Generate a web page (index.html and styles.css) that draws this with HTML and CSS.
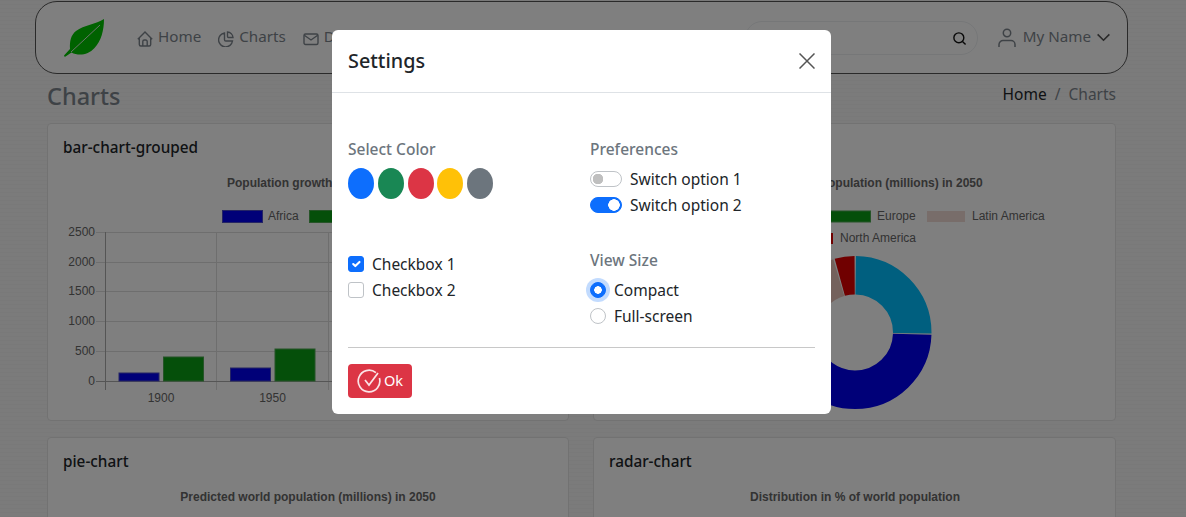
FILE: index.html
```html
<!DOCTYPE html>
<html lang="en">
<head>
  <meta charset="UTF-8" />
  <meta name="viewport" content="width=device-width, initial-scale=1" />
  <title>Charts</title>
  <link rel="stylesheet" href="styles.css">
</head>
<body>
  <nav class="navbar">
    <svg class="logo" viewBox="64 19 40 38" width="40" height="38">
      <path fill="#00c400" d="M104 19C96 24 84 25 76 31C71 35 69.500 41 70 49L64 55.500L64.800 57L71.500 52.500C78 56 88 55.500 94.500 48C101 41 104 31 104 19Z" />
      <path fill="none" stroke="#d8e8d8" stroke-width="1" d="M71 52L100 25" />
    </svg>
    <a class="nav-link" href="#">
      <svg class="icon" viewBox="0 0 16 16"><path d="M.8 8.200L8 1L15.200 8.200M2.300 7V13.500A1.500 1.500 0 0 0 3.800 15H12.200A1.500 1.500 0 0 0 13.700 13.500V7M5.800 15V10.500A1.500 1.500 0 0 1 7.300 9H8.700A1.500 1.500 0 0 1 10.200 10.500V15" /></svg>
      Home
    </a>
    <a class="nav-link" href="#">
      <svg class="icon" viewBox="0 0 16 16"><path d="M6.500 2A7 7 0 1 0 14.500 10H7.800A1.300 1.300 0 0 1 6.500 8.700Z" /><path d="M9.500 1V5.500A1 1 0 0 0 10.500 6.500H15A6 6 0 0 0 9.500 1Z" /></svg>
      Charts
    </a>
    <a class="nav-link" href="#">
      <svg class="icon" viewBox="0 0 16 16"><rect x="1" y="3" width="14" height="10.500" rx="1.500" /><path d="M1.300 4.200L8 9L14.700 4.200" /></svg>
      Dashboard
    </a>
    <form class="search">
      <input class="search-input" type="text" />
      <svg class="search-icon" viewBox="0 0 16 16"><circle cx="7.300" cy="7.300" r="5.300" /><path d="M11.200 11.200L14.500 14.500" /></svg>
    </form>
    <a class="user" href="#">
      <svg class="user-icon" viewBox="0 0 18 20"><circle cx="9" cy="5" r="3.700" /><path d="M1 19V16.500A4 4 0 0 1 5 12.500H13A4 4 0 0 1 17 16.500V19" /></svg>
      My Name
      <svg class="chevron" viewBox="0 0 16 10"><path d="M1.500 1.500L8 8L14.500 1.500" /></svg>
    </a>
  </nav>

  <div class="page-head">
    <h3>Charts</h3>
    <div class="breadcrumb"><a href="#">Home</a><span class="sep">/</span><span class="current">Charts</span></div>
  </div>

  <div class="cards">
    <div class="card">
      <h5>bar-chart-grouped</h5>
      <svg class="chart" viewBox="63 172 490 241">
        <text class="chart-title" x="308" y="187">Population growth (millions)</text>
        <rect class="blue" x="222.500" y="210.500" width="40" height="12" />
        <text class="legend" x="268" y="220">Africa</text>
        <rect class="green" x="309.500" y="210.500" width="40" height="12" />
        <path class="grid" d="M96 232.500H551M96 262.500H551M96 291.500H551M96 321.500H551M96 351.500H551M216.500 232V390M328.500 232V390M439.500 232V390M551.500 232V390" />
        <path class="axis" d="M105.500 232V390M96 381.500H551" />
        <text class="tick" x="95" y="236">2500</text>
        <text class="tick" x="95" y="266">2000</text>
        <text class="tick" x="95" y="295">1500</text>
        <text class="tick" x="95" y="325">1000</text>
        <text class="tick" x="95" y="355">500</text>
        <text class="tick" x="95" y="385">0</text>
        <rect class="blue" x="119" y="373" width="40" height="8" />
        <rect class="green" x="163.500" y="357" width="40" height="24" />
        <rect class="blue" x="230.500" y="368" width="40" height="13" />
        <rect class="green" x="275" y="349" width="40" height="32" />
        <text class="tick-x" x="161" y="402">1900</text>
        <text class="tick-x" x="272.500" y="402">1950</text>
      </svg>
    </div>
    <div class="card">
      <h5></h5>
      <svg class="chart" viewBox="609 172 490 241">
        <text class="chart-title" x="855" y="187">Predicted world population (millions) in 2050</text>
        <rect class="green" x="830.500" y="211" width="40" height="11" />
        <text class="legend" x="877" y="220">Europe</text>
        <rect x="927" y="211" width="38" height="11" fill="#e8c3b9" fill-opacity=".6" />
        <text class="legend" x="972" y="220">Latin America</text>
        <rect x="795" y="233" width="38" height="11" fill="#e00000" />
        <text class="legend" x="840" y="242">North America</text>
        <g fill="none" stroke-width="38.500" transform="rotate(-90 855 332.500)">
          <circle cx="855" cy="332.500" r="57.250" pathLength="100" stroke="#00bfff" stroke-dasharray="25 75" stroke-dashoffset="-.2" />
          <circle cx="855" cy="332.500" r="57.250" pathLength="100" stroke="#0000f0" stroke-dasharray="45 55" stroke-dashoffset="-25.500" />
          <circle cx="855" cy="332.500" r="57.250" pathLength="100" stroke="#00a000" stroke-dasharray="16 84" stroke-dashoffset="-70.700" />
          <circle cx="855" cy="332.500" r="57.250" pathLength="100" stroke="#e8c3b9" stroke-dasharray="8.400 91.600" stroke-dashoffset="-87" />
          <circle cx="855" cy="332.500" r="57.250" pathLength="100" stroke="#e00000" stroke-dasharray="4.200 95.800" stroke-dashoffset="-95.700" />
        </g>
      </svg>
    </div>
    <div class="card">
      <h5>pie-chart</h5>
      <svg class="chart" viewBox="63 172 490 241">
        <text class="chart-title" x="308" y="187">Predicted world population (millions) in 2050</text>
      </svg>
    </div>
    <div class="card">
      <h5>radar-chart</h5>
      <svg class="chart" viewBox="609 172 490 241">
        <text class="chart-title" x="855" y="187">Distribution in % of world population</text>
      </svg>
    </div>
  </div>

  <div class="backdrop"></div>

  <div class="modal">
    <div class="modal-header">
      <h4>Settings</h4>
      <button class="close" type="button" aria-label="Close">
        <svg viewBox="0 0 16 16"><path d="M.5 .5L15.500 15.500M15.500 .5L.5 15.500" /></svg>
      </button>
    </div>
    <div class="modal-body">
      <div class="settings">
        <div>
          <div class="group-label">Select Color</div>
          <div class="colors">
            <button class="dot dot-blue" type="button"></button>
            <button class="dot dot-green" type="button"></button>
            <button class="dot dot-red" type="button"></button>
            <button class="dot dot-yellow" type="button"></button>
            <button class="dot dot-gray" type="button"></button>
          </div>
        </div>
        <div>
          <div class="group-label">Preferences</div>
          <div class="options">
            <label class="option"><input class="switch" type="checkbox" />Switch option 1</label>
            <label class="option"><input class="switch" type="checkbox" checked />Switch option 2</label>
          </div>
        </div>
        <div class="checks">
          <label class="option"><input class="check" type="checkbox" checked />Checkbox 1</label>
          <label class="option"><input class="check" type="checkbox" />Checkbox 2</label>
        </div>
        <div>
          <div class="group-label">View Size</div>
          <div class="options">
            <label class="option"><input class="radio radio-focus" type="radio" name="size" checked />Compact</label>
            <label class="option"><input class="radio" type="radio" name="size" />Full-screen</label>
          </div>
        </div>
      </div>
      <hr />
      <button class="btn-ok" type="button">
        <svg viewBox="0 0 24 24"><path d="M18.900 3.700A10.800 10.800 0 1 0 22.400 9" /><path d="M8 11L12 16L21 4" /></svg>
        <span>Ok</span>
      </button>
    </div>
  </div>
</body>
</html>
```

FILE: styles.css
```css
html, body {
  height: 100%;
  overflow: hidden;
}

body {
  margin: 0;
  padding: 1px 70px 0 47px;
  box-sizing: border-box;
  font-family: "Noto Sans", sans-serif;
  font-size: 15.5px;
  color: #212529;
  background-color: #f6f6f6;
  background-image: repeating-linear-gradient(0deg, #f3f3f3 0, #f3f3f3 1px, #f7f7f7 1px, #f7f7f7 4px);
}

a {
  color: inherit;
  text-decoration: none;
}

.navbar {
  display: flex;
  align-items: center;
  width: 1093px;
  height: 73px;
  margin-left: -12px;
  padding: 0 16px 0 28px;
  box-sizing: border-box;
  border: 1px solid #555;
  border-radius: 22px;
  background: #fff;
}

.logo {
  margin-right: 33px;
}

.nav-link {
  display: flex;
  align-items: center;
  gap: 5px;
  margin: -4px 17px 0 0;
  color: #7d858d;
  font-size: 15.200px;
}

.icon {
  width: 16px;
  height: 16px;
  margin-top: 7px;
  fill: none;
  stroke: #7d858d;
  stroke-width: 1.400;
}

.search {
  position: relative;
  margin-left: auto;
  margin-right: 20px;
}

.search-input {
  display: block;
  width: 233px;
  height: 34px;
  padding: 0 12px;
  box-sizing: border-box;
  border: 1px solid #eceff1;
  border-radius: 17px;
  background: transparent;
}

.search-icon {
  position: absolute;
  top: 10px;
  right: 11px;
  width: 15px;
  height: 15px;
  fill: none;
  stroke: #111;
  stroke-width: 1.500;
}

.user {
  display: flex;
  align-items: center;
  margin-top: -4px;
  color: #7d858d;
  font-size: 15.200px;
}

.user-icon {
  width: 18px;
  height: 20px;
  margin: 5px 7px 0 0;
  fill: none;
  stroke: #7d858d;
  stroke-width: 1.500;
}

.chevron {
  width: 15px;
  height: 9px;
  margin: 4px 0 0 5px;
  fill: none;
  stroke: #555;
  stroke-width: 1.800;
}

.page-head {
  display: flex;
  justify-content: space-between;
  align-items: center;
  width: 1069px;
  height: 49px;
  color: #7d858d;
}

.page-head h3 {
  margin: 0 0 5px;
  font-size: 23.500px;
  font-weight: 500;
}

.breadcrumb {
  display: flex;
  margin-top: -9px;
}

.breadcrumb a {
  color: #212529;
}

.sep {
  margin: 0 8px;
}

.cards {
  display: grid;
  grid-template-columns: 522px 523px;
  gap: 16px 24px;
}

.card {
  padding: 11px 15px 7px;
  border: 1px solid #e4e4e4;
  border-radius: 4px;
  background: #fff;
}

.card h5 {
  min-height: 24px;
  margin: 0 0 13px;
  font-size: 15.300px;
  font-weight: 500;
  line-height: 24px;
}

.chart {
  display: block;
  width: 490px;
  height: 241px;
  font-family: "Liberation Sans", sans-serif;
  font-size: 12px;
}

.chart-title {
  font-weight: bold;
  fill: #666;
  text-anchor: middle;
}

.legend {
  fill: #666;
}

.tick {
  fill: #666;
  text-anchor: end;
}

.tick-x {
  fill: #666;
  text-anchor: middle;
}

.grid {
  fill: none;
  stroke: #dcdcdc;
}

.axis {
  fill: none;
  stroke: #aaa;
}

.blue {
  fill: #0000f0;
  stroke: #4a4ac8;
}

.green {
  fill: #0a9e14;
  stroke: #4ca850;
}

.backdrop {
  position: fixed;
  inset: 0;
  background: rgba(0, 0, 0, .5);
}

.modal {
  position: fixed;
  top: 30px;
  left: 332px;
  width: 499px;
  height: 384px;
  border-radius: 6px;
  background: #fff;
}

.modal-header {
  display: flex;
  justify-content: space-between;
  align-items: center;
  height: 62px;
  padding: 0 16px;
  border-bottom: 1px solid #dee2e6;
}

.modal-header h4 {
  margin: -2px 0 0;
  font-size: 19.800px;
  font-weight: 500;
}

.close {
  width: 16px;
  height: 16px;
  padding: 0;
  border: 0;
  background: none;
}

.close svg {
  display: block;
  width: 16px;
  height: 16px;
  fill: none;
  stroke: #555;
  stroke-width: 1.500;
}

.modal-body {
  padding: 44px 16px 16px;
}

.settings {
  display: grid;
  grid-template-columns: 242px 225px;
  row-gap: 30px;
}

.group-label {
  height: 24px;
  line-height: 24px;
  font-weight: 500;
  color: #6c757d;
}

.colors {
  display: flex;
  gap: 3.750px;
  margin-top: 7px;
}

.dot {
  width: 26px;
  height: 31px;
  padding: 0;
  border: 0;
  border-radius: 50%;
}

.dot-blue { background: #0d6efd; }
.dot-green { background: #198754; }
.dot-red { background: #dc3545; }
.dot-yellow { background: #ffc107; }
.dot-gray { background: #6c757d; }

.options {
  margin-top: 5px;
}

.checks {
  margin-top: 3px;
}

.option {
  display: flex;
  align-items: center;
  height: 26px;
}

.option input {
  flex: none;
  margin: 0 8px 0 0;
  appearance: none;
  background-color: #fff;
  background-repeat: no-repeat;
  background-position: center;
  border: 1px solid #bfc3c7;
}

.switch {
  width: 32px;
  height: 16px;
  border-radius: 8px;
  background-image: radial-gradient(circle at 7px 7px, #bfbfbf 5px, transparent 5.500px);
}

.switch:checked {
  background-color: #0d6efd;
  border-color: #0d6efd;
  background-image: radial-gradient(circle at 23px 7px, #fff 5.500px, transparent 6px);
}

.check {
  width: 16px;
  height: 16px;
  border-radius: 3px;
}

.check:checked {
  background-color: #0d6efd;
  border-color: #0d6efd;
  background-image: url("data:image/svg+xml,%3Csvg xmlns='http://www.w3.org/2000/svg' viewBox='0 0 20 20'%3E%3Cpath fill='none' stroke='%23fff' stroke-linecap='round' stroke-linejoin='round' stroke-width='3' d='M6 10l3 3 6-6'/%3E%3C/svg%3E");
}

.radio {
  width: 16px;
  height: 16px;
  border-radius: 50%;
}

.radio:checked {
  background-color: #0d6efd;
  border-color: #0d6efd;
  background-image: radial-gradient(circle, #fff 3.500px, transparent 4px);
}

.radio-focus {
  box-shadow: 0 0 0 4px rgba(13, 110, 253, .25);
}

hr {
  height: 1px;
  margin: 18px 0 16px;
  border: 0;
  background: #c8c8c8;
}

.btn-ok {
  display: flex;
  align-items: center;
  gap: 3px;
  width: 64px;
  height: 34px;
  padding: 0 0 0 9px;
  border: 0;
  border-radius: 4px;
  background: #dc3545;
  color: #fff;
  font-family: "Noto Sans", sans-serif;
  font-size: 14.500px;
}

.btn-ok span {
  margin-top: -2px;
}

.btn-ok svg {
  width: 24px;
  height: 24px;
  fill: none;
  stroke: #fbe3e6;
  stroke-width: 1.700;
}
```
